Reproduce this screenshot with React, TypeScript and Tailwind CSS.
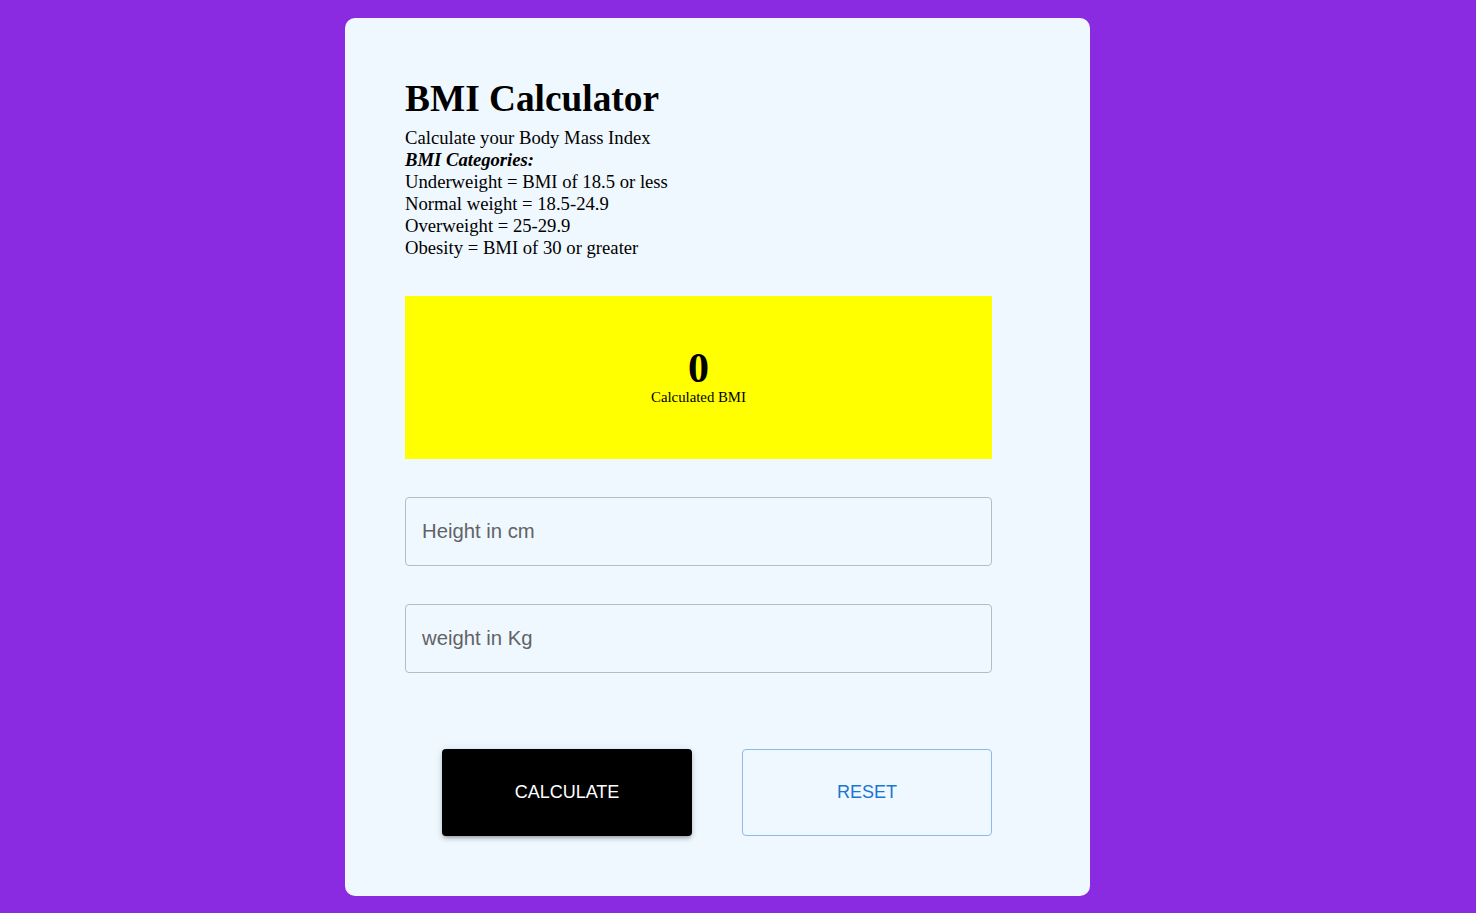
import React, { useState } from 'react';

const App: React.FC = () => {
    const [height, setHeight] = useState('');
    const [weight, setWeight] = useState('');
    const [bmi, setBmi] = useState<number>(0);

    const handleCalculate = () => {
        const h = parseFloat(height) / 100;
        const w = parseFloat(weight);
        if (!h || !w) return;
        setBmi(Number((w / (h * h)).toFixed(1)));
    };

    const handleReset = () => {
        setHeight('');
        setWeight('');
        setBmi(0);
    };

    return (
        <div className="min-h-[913px] bg-[#8a2be2] pt-[18px] pb-[17px] pl-[345px] font-['Liberation_Serif',serif] text-black">
            <div className="w-[745px] h-[878px] bg-[#f0f8ff] rounded-[10px] pt-[60px] pl-[60px] pr-[98px]">
                {/* Header */}
                <h1 className="text-[37.33px] font-bold leading-[41px] mb-[8px]">BMI Calculator</h1>
                <div className="text-[18.67px] leading-[22px]">
                    <p>Calculate your Body Mass Index</p>
                    <p className="font-bold italic">BMI Categories:</p>
                    <p>Underweight = BMI of 18.5 or less</p>
                    <p>Normal weight = 18.5-24.9</p>
                    <p>Overweight = 25-29.9</p>
                    <p>Obesity = BMI of 30 or greater</p>
                </div>

                {/* Result */}
                <div className="mt-[37px] h-[163px] bg-[#ffff00] flex flex-col items-center justify-center pb-[4px]">
                    <div className="text-[42px] font-bold leading-none">{bmi}</div>
                    <div className="text-[14.8px] leading-none mt-[1px]">Calculated BMI</div>
                </div>

                {/* Inputs */}
                <div className="mt-[38px] flex flex-col gap-[38px] font-['Liberation_Sans',Arial,sans-serif]">
                    <input
                        type="text"
                        placeholder="Height in cm"
                        value={height}
                        onChange={(e) => setHeight(e.target.value)}
                        className="w-full h-[69px] border border-[#b4bcc6] rounded-[4px] bg-transparent px-[16px] text-[20.3px] text-black placeholder:text-[#606366] focus:outline-none"
                    />
                    <input
                        type="text"
                        placeholder="weight in Kg"
                        value={weight}
                        onChange={(e) => setWeight(e.target.value)}
                        className="w-full h-[69px] border border-[#b4bcc6] rounded-[4px] bg-transparent px-[16px] text-[20.3px] text-black placeholder:text-[#606366] focus:outline-none"
                    />
                </div>

                {/* Buttons */}
                <div className="mt-[76px] flex justify-end gap-[50px] font-['Liberation_Sans',Arial,sans-serif]">
                    <button
                        onClick={handleCalculate}
                        className="w-[250px] h-[87px] bg-black text-white text-[18px] rounded-[4px] shadow-[0_3px_3px_-2px_rgba(0,0,0,0.2),0_3px_4px_0_rgba(0,0,0,0.14),0_1px_8px_0_rgba(0,0,0,0.12)]"
                    >
                        CALCULATE
                    </button>
                    <button
                        onClick={handleReset}
                        className="w-[250px] h-[87px] border border-[#8cbbe9] text-[#1976d2] text-[18px] rounded-[4px] bg-transparent"
                    >
                        RESET
                    </button>
                </div>
            </div>
        </div>
    );
};

export default App;
